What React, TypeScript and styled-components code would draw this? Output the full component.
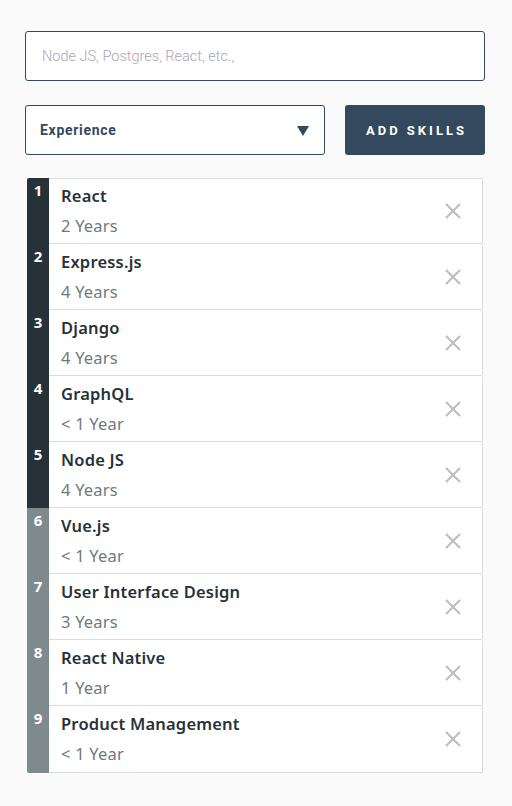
import React from "react";
import styled, { createGlobalStyle } from "styled-components";

const Global = createGlobalStyle`
  html, body { margin: 0; padding: 0; background: #fafafa; }
  * { box-sizing: border-box; }
`;

const Page = styled.div`
  width: 512px;
  min-height: 806px;
  padding: 31px 27px 0 25px;
  background: #fafafa;
  font-family: Roboto, "Liberation Sans", sans-serif;
`;

const Input = styled.input`
  display: block;
  width: 460px;
  height: 50px;
  border: 1px solid #34495e;
  border-radius: 3px;
  background: #fff;
  padding: 0 16px;
  font-family: Roboto, sans-serif;
  font-weight: 300;
  font-size: 14.5px;
  color: #333;
  outline: none;
  &::placeholder { color: #a3a9b2; }
`;

const Controls = styled.div`
  display: flex;
  gap: 20px;
  margin-top: 24px;
  width: 460px;
`;

const Select = styled.div`
  flex: 0 0 300px;
  height: 50px;
  border: 1px solid #34495e;
  border-radius: 3px;
  background: #fff;
  display: flex;
  align-items: center;
  justify-content: space-between;
  padding: 0 15px 0 14px;
  font-family: Roboto, sans-serif;
  font-weight: 700;
  font-size: 14px;
  letter-spacing: 0.7px;
  color: #34495e;
`;

const Triangle = styled.span`
  width: 0;
  height: 0;
  border-left: 6px solid transparent;
  border-right: 6px solid transparent;
  border-top: 10px solid #34495e;
  margin-top: 1px;
`;

const Button = styled.button`
  flex: 1;
  height: 50px;
  border: none;
  border-radius: 3px;
  background: #34495e;
  color: #fff;
  font-family: Roboto, sans-serif;
  font-weight: 700;
  font-size: 13px;
  letter-spacing: 3px;
  padding: 0 0 0 3px;
`;

const List = styled.div`
  margin-top: 23px;
  margin-left: 2px;
  width: 456px;
  display: flex;
  flex-direction: column;
`;

const Row = styled.div<{ $last: boolean }>`
  display: flex;
  height: ${(p) => (p.$last ? "67px" : "66px")};
`;

const Num = styled.div<{ $dark: boolean; $first: boolean; $last: boolean }>`
  flex: 0 0 22px;
  background: ${(p) => (p.$dark ? "#263238" : "#7f8a8c")};
  color: #fff;
  font-family: "Noto Sans", "Open Sans", sans-serif;
  font-weight: 700;
  font-size: 15px;
  text-align: center;
  padding-top: 2px;
  line-height: 20px;
  border-top-left-radius: ${(p) => (p.$first ? "2px" : "0")};
  border-bottom-left-radius: ${(p) => (p.$last ? "2px" : "0")};
`;

const Card = styled.div<{ $first: boolean }>`
  flex: 1;
  background: #fff;
  border: 1px solid #d8dcdc;
  border-left: none;
  border-top: ${(p) => (p.$first ? "1px solid #d8dcdc" : "none")};
  border-radius: 0 2px 2px 0;
  display: flex;
  align-items: center;
  padding: 0 20px 0 12px;
`;

const Texts = styled.div`
  flex: 1;
  display: flex;
  flex-direction: column;
  gap: 10px;
  font-family: "Noto Sans", "Open Sans", sans-serif;
`;

const Title = styled.div`
  font-weight: 600;
  font-size: 16.5px;
  line-height: 20px;
  color: #263238;
  letter-spacing: 0.2px;
`;

const Sub = styled.div`
  font-size: 16.5px;
  line-height: 20px;
  color: #6f7a80;
  letter-spacing: 0.2px;
`;

const Close = styled.svg`
  width: 18px;
  height: 18px;
  flex: 0 0 18px;
`;

const skills: [string, string][] = [
  ["React", "2 Years"],
  ["Express.js", "4 Years"],
  ["Django", "4 Years"],
  ["GraphQL", "< 1 Year"],
  ["Node JS", "4 Years"],
  ["Vue.js", "< 1 Year"],
  ["User Interface Design", "3 Years"],
  ["React Native", "1 Year"],
  ["Product Management", "< 1 Year"],
];

export default function App() {
  return (
    <Page>
      <Global />
      <Input placeholder="Node JS, Postgres, React, etc.," />
      <Controls>
        <Select>
          <span>Experience</span>
          <Triangle />
        </Select>
        <Button>ADD SKILLS</Button>
      </Controls>
      <List>
        {skills.map(([name, exp], i) => {
          const last = i === skills.length - 1;
          return (
            <Row key={name} $last={last}>
              <Num $dark={i < 5} $first={i === 0} $last={last}>
                {i + 1}
              </Num>
              <Card $first={i === 0}>
                <Texts>
                  <Title>{name}</Title>
                  <Sub>{exp}</Sub>
                </Texts>
                <Close viewBox="0 0 18 18">
                  <path d="M2 2 L16 16 M16 2 L2 16" stroke="#bdbdbd" strokeWidth="2" fill="none" />
                </Close>
              </Card>
            </Row>
          );
        })}
      </List>
    </Page>
  );
}
